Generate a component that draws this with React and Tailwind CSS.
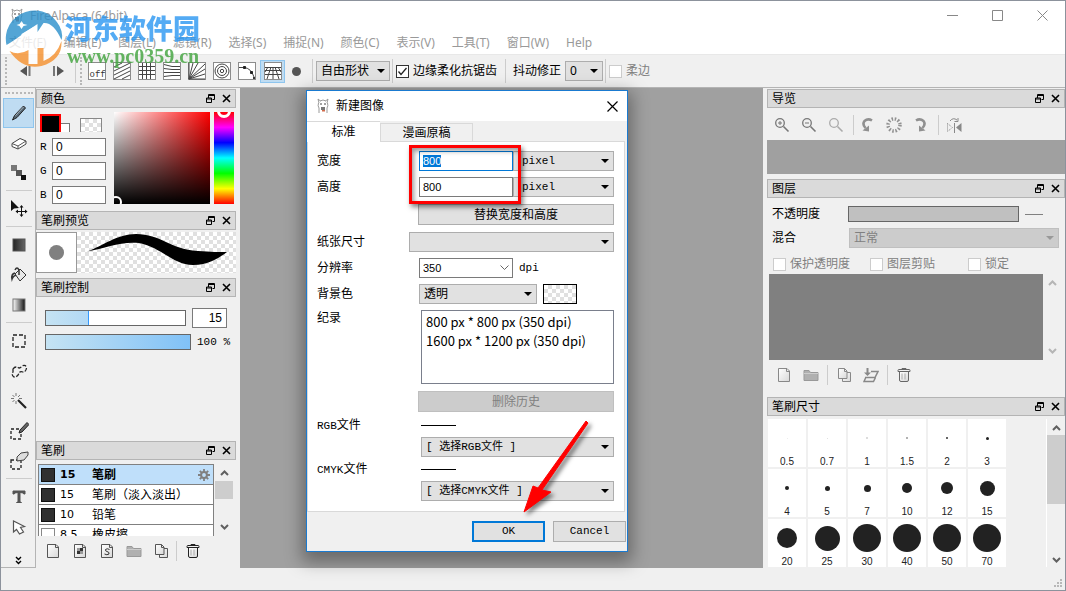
import { useEffect, useRef } from 'react'

const MENUS = ['文件(F)', '编辑(E)', '图层(L)', '滤镜(R)', '选择(S)', '捕捉(N)', '颜色(C)', '表示(V)', '工具(T)', '窗口(W)', 'Help']

const BRUSHES = [
  { size: '15', name: '笔刷', active: true },
  { size: '15', name: '笔刷（淡入淡出）' },
  { size: '10', name: '铅笔' },
  { size: '8.5', name: '橡皮擦', hollow: true },
]

const SIZES = [
  ['0.5', 1, '#e8e8e8'], ['0.7', 1, '#d8d8d8'], ['1', 2, '#d0d0d0'], ['1.5', 2, '#999999'], ['2', 2, '#333333'], ['3', 3, '#222222'],
  ['4', 4, '#222222'], ['5', 5, '#222222'], ['7', 7, '#222222'], ['10', 10, '#222222'], ['12', 12, '#222222'], ['15', 15, '#222222'],
  ['20', 20, '#222222'], ['25', 25, '#222222'], ['30', 28, '#222222'], ['40', 28, '#222222'], ['50', 28, '#222222'], ['70', 28, '#222222'],
]

const CHECKER = 'bg-white bg-[conic-gradient(#e0e0e0_25%,#ffffff_0_50%,#e0e0e0_0_75%,#ffffff_0)] bg-[length:8px_8px]'
const MONO = "font-['Liberation_Mono','Noto_Sans_CJK_SC',monospace] text-[11px]"

function Svg({ w = 20, h = 20, children, className = '' }) {
  return (
    <svg width={w} height={h} viewBox={`0 0 ${w} ${h}`} fill="none" stroke="currentColor" className={`shrink-0 ${className}`} aria-hidden="true">
      {children}
    </svg>
  )
}

function Alpaca() {
  return (
    <Svg w={14} h={16} className="text-[#9a9a9a]">
      <path d="M3 5 L2 1 L4.500 3 M11 5 L12 1 L9.500 3 M4 3 Q7 1 10 3 M2.500 5 Q1.500 8 3 10 V15 M11.500 5 Q12.500 8 11 10 V15" />
      <path d="M4 6 h2 M8 6 h2" stroke="#444" />
      <path d="M5 9 h4 v3 h-4z" fill="#777" stroke="none" />
      <path d="M6 12 h3 v1.500 h-3z" fill="#d06a4a" stroke="none" />
    </Svg>
  )
}

function Drop({ className = '', width = '', disabled, label, value, text = 'text-xs' }) {
  return (
    <span className={`grid shrink-0 items-center ${width}`}>
      <select
        aria-label={label}
        disabled={disabled}
        className={`[grid-area:1/1] h-5 w-full appearance-none border px-1 outline-none disabled:opacity-100 ${text} ${
          disabled ? 'border-[#bfbfbf] bg-[#cccccc] text-[#808080]' : 'border-[#adadad] bg-[#e1e1e1] text-black'
        } ${className}`}
      >
        <option>{value}</option>
      </select>
      <Svg w={8} h={4} className="pointer-events-none [grid-area:1/1] mr-[5px] justify-self-end">
        <path d="M0 0h8L4 4z" fill={disabled ? '#999' : '#000'} stroke="none" />
      </Svg>
    </span>
  )
}

function Check({ label, checked, disabled }) {
  return (
    <label className={`flex items-center gap-1 ${disabled ? 'text-[#808080]' : 'text-black'}`}>
      <span className="grid size-[13px] place-items-center">
        <input
          type="checkbox"
          defaultChecked={checked}
          disabled={disabled}
          className={`[grid-area:1/1] size-[13px] appearance-none border bg-white ${disabled ? 'border-[#cccccc]' : 'border-[#333333]'}`}
        />
        {checked && (
          <Svg w={11} h={11} className="pointer-events-none [grid-area:1/1]">
            <path d="M1.500 5.500 4 8.500 9.500 2" stroke="#222" strokeWidth="1.300" />
          </Svg>
        )}
      </span>
      {label}
    </label>
  )
}

function DockHeader({ title }) {
  return (
    <header className="flex h-[19px] shrink-0 items-center border border-[#b4b4b4] bg-[#dadada] px-1">
      <h2 className="flex-1 leading-4">{title}</h2>
      <button type="button" aria-label={`浮动 ${title}`}>
        <Svg w={9} h={9}>
          <path d="M2.500 4V.5h6v5H6.500M3 1.500h5" />
          <path d="M.5 4h5v4.500h-5zM1 5h4.500" />
        </Svg>
      </button>
      <button type="button" aria-label={`关闭 ${title}`} className="ml-[7px]">
        <Svg w={9} h={9}>
          <path d="M1 1l7 7M8 1L1 8" strokeWidth="1.600" />
        </Svg>
      </button>
    </header>
  )
}

function Chevron({ up, light }) {
  return (
    <Svg w={9} h={6} className={light ? 'text-[#b5b5b5]' : 'text-[#606060]'}>
      <path d={up ? 'M1 5l3.500-3.500L8 5' : 'M1 1l3.500 3.500L8 1'} strokeWidth="2" />
    </Svg>
  )
}

function Grip() {
  return <span className="h-7 w-[3px] border-l-2 border-dotted border-[#b8b8b8]" />
}

function Sep() {
  return <span className="h-6 w-px shrink-0 bg-[#cccccc]" />
}

// ---- toolbar ----

function SnapTile({ children }) {
  return (
    <Svg w={18} h={18} className="text-[#444]">
      <rect x=".5" y=".5" width="17" height="17" fill="#fff" stroke="#8c8c8c" />
      {children}
    </Svg>
  )
}

const SNAPS = [
  ['关', <text key="t" x="1.500" y="15" fontSize="9" stroke="none" fill="#333" fontFamily="Liberation Mono">off</text>],
  ['平行', <path key="p" d="M1 5l8-4M1 9l16-8M1 13l16-8M1 17l16-8M9 17l8-4" />],
  ['十字', <path key="p" d="M4.500 1v16M8.500 1v16M12.500 1v16M1 4.500h16M1 8.500h16M1 12.500h16" />],
  ['消失', <path key="p" d="M1 2.500l8 2h8M1 6.500l8 1h8M1 10.500h16M1 14.500l8-1h8" />],
  ['放射', <path key="p" d="M1 17V1M1 17L5 1M1 17L10 1M1 17L17 2M1 17L17 7M1 17L17 12M1 17h16" />],
  ['同心圆', <g key="p"><circle cx="9" cy="9" r="7" /><circle cx="9" cy="9" r="4.500" /><circle cx="9" cy="9" r="1.700" /></g>],
  ['曲线', <g key="p"><path d="M1 5.500h5Q13 6 16 15v2" /><path d="M5.500 4.500h2v2h-2zM12.500 9.500h2v2h-2zM15.500 15.500h1v1h-1z" fill="#222" stroke="#222" /></g>],
]

function Toolbar() {
  return (
    <div className="flex h-[33px] shrink-0 items-center border-b border-[#b4b4b4] bg-[#f0f0f0] pl-1">
      <Grip />
      <button type="button" aria-label="上一步" className="ml-3 text-[#555]">
        <Svg w={12} h={10}>
          <path d="M7 0v10L0 5z" fill="currentColor" stroke="none" />
          <path d="M9.500 0v10" stroke="#777" strokeWidth="2" />
        </Svg>
      </button>
      <button type="button" aria-label="下一步" className="ml-5 mr-[11px] text-[#555]">
        <Svg w={12} h={10}>
          <path d="M5 0v10l7-5z" fill="currentColor" stroke="none" />
          <path d="M2 0v10" stroke="#777" strokeWidth="2" />
        </Svg>
      </button>
      <Sep />
      <span className="w-1" />
      <Grip />
      <div className="ml-[5px] flex gap-[7px]">
        {SNAPS.map(([name, art]) => (
          <button type="button" key={name} aria-label={name}>
            <SnapTile>{art}</SnapTile>
          </button>
        ))}
      </div>
      <button type="button" aria-label="透视" className="ml-1 grid h-[23px] w-[25px] place-items-center border border-[#8ec5ee] bg-[#bfdcf2]">
        <SnapTile>
          <path d="M1 5.500h16M1 8.500h16M1 12.500h16M7 5L3 17M11 5l4 12M9 5v12M4 5L1 10M14 5l3 5" />
        </SnapTile>
      </button>
      <span className="ml-[7px] mr-[11px] size-[9px] shrink-0 rounded-full bg-[#555]" />
      <Sep />
      <Drop label="形状" value="自由形状" width="ml-[3px] mr-0.5 w-[74px]" />
      <Sep />
      <span className="w-[3px]" />
      <Check label="边缘柔化抗锯齿" checked />
      <span className="w-2" />
      <Sep />
      <label htmlFor="jitter" className="ml-[7px]">抖动修正</label>
      <Drop label="抖动修正" value="0" width="ml-1 mr-0.5 w-[38px]" />
      <Sep />
      <span className="w-[3px]" />
      <Check label="柔边" disabled />
    </div>
  )
}

// ---- tool strip ----

const TOOLS = [
  ['画笔', <g key="g"><path d="M3.500 17l2-4.500L14.500 3l2 2L8 14.500z" fill="#5a6b78" stroke="#222" /><path d="M6.500 12.500l8-8.500" stroke="#a8b6c0" /></g>],
  ['橡皮擦', <g key="g"><path d="M3 10.500l8-5 6 2.500v3l-8 5-6-2.500z" fill="#fff" stroke="#444" /><path d="M3 10.500l6 2.500 8-5M9 13v3" stroke="#555" /></g>],
  ['点', <g key="g" stroke="none"><path d="M2 2h6v6H2z" fill="#777" /><path d="M7 7h6v6H7z" fill="#555" /><path d="M12 12h5v5h-5z" fill="#111" /></g>],
  null,
  ['移动', <g key="g"><path d="M2 1v11l3-2.500 5-.5z" fill="#111" stroke="none" /><path d="M12.500 7v10M7 12.500h11" stroke="#111" /><path d="M10.500 8.500l2-2.500 2 2.500zM10.500 15.500l2 2.500 2-2.500zM9 10.500L6.500 12.500l2.500 2zM16 10.500l2.500 2-2.500 2z" fill="#111" stroke="none" /></g>],
  null,
  ['填色', <rect key="g" x="4" y="4" width="12" height="12" fill="url(#solid)" stroke="#555" />],
  ['油漆桶', <g key="g"><path d="M6 9l5-5 6 6-6 6z" fill="#e8e8e8" stroke="#333" /><path d="M10 10V5Q8 1 6 5M6 8Q2 9 3 14Q4 11 7 10" fill="none" stroke="#333" strokeWidth="1.500" /></g>],
  ['渐变', <rect key="g" x="4" y="4" width="12" height="12" fill="url(#fade)" stroke="#777" />],
  null,
  ['矩形选择', <rect key="g" x="4" y="4" width="12" height="12" stroke="#222" strokeDasharray="4 2" strokeWidth="1.300" />],
  ['套索', <path key="g" d="M4 8Q6 5 9 6.500Q11 8 13 5Q17 3 17.500 7Q17 11 14 11Q11 10 10 12Q9 16 5 16Q2 14 4 11z" stroke="#222" strokeDasharray="4 1.500" strokeWidth="1.300" />],
  ['魔棒', <g key="g"><path d="M9 9l8 8" stroke="#222" strokeWidth="2.200" /><path d="M7 2v3M7 10v3M2 7.500h3M10 7.500h3M3.500 4l2 2M11 4L9 6M3.500 11l2-2" stroke="#777" /></g>],
  ['选择笔', <g key="g"><path d="M2 8h10v10H2z" stroke="#222" strokeDasharray="3 2" strokeWidth="1.300" /><path d="M10 12l1-3L18 1.500l2 2L13 11z" fill="#666" stroke="#222" /></g>],
  ['选择橡皮擦', <g key="g"><path d="M2 9h10v9H2z" stroke="#222" strokeDasharray="3 2" strokeWidth="1.300" /><path d="M8 6l4-4 7-1v3l-4 5-7 1z" fill="#ddd" stroke="#444" /></g>],
  null,
  ['文字', <path key="g" d="M4 7V4h12v3h-1Q14 5.500 11 5.500V15l1.500.5h-5L9 15V5.500Q6 5.500 5 7z" fill="#555" stroke="#555" />],
  ['操作', <path key="g" d="M4.500 4v11l3-2.500 3 4.500 4-2-3-4.500 4-1z" fill="#fff" stroke="#555" strokeWidth="1.200" />],
]

function ToolStrip() {
  return (
    <nav aria-label="工具" className="flex w-[35px] shrink-0 flex-col border-b border-r border-[#b4b4b4] pl-0.5">
      <svg width="0" height="0" className="absolute" aria-hidden="true">
        <defs>
          <linearGradient id="solid"><stop stopColor="#222" /><stop offset="1" stopColor="#666" /></linearGradient>
          <linearGradient id="fade"><stop stopColor="#fff" /><stop offset="1" stopColor="#111" /></linearGradient>
          <linearGradient id="paper" x2="1" y2="1"><stop stopColor="#fff" /><stop offset="1" stopColor="#d8d8d8" /></linearGradient>
        </defs>
      </svg>
      <span className="mx-0.5 mb-[3px] mt-1 h-[3px] border-t-2 border-dotted border-[#b8b8b8]" />
      {TOOLS.map((tool, i) =>
        tool ? (
          <button
            type="button"
            key={tool[0]}
            aria-label={tool[0]}
            className={`grid h-[30px] w-[31px] shrink-0 place-items-center ${i === 0 ? 'border border-[#8ec5ee] bg-[#bfdcf2]' : ''}`}
          >
            <Svg>{tool[1]}</Svg>
          </button>
        ) : (
          <span key={i} className="mx-[3px] my-[2px] h-0.5 border-t border-[#cccccc]" />
        ),
      )}
      <button type="button" aria-label="更多" className="mt-auto grid place-items-center pb-0.5 pr-0.5">
        <Svg w={7} h={9} className="text-black">
          <path d="M1 1l2.500 2.500L6 1M1 5l2.500 2.500L6 5" strokeWidth="1.400" />
        </Svg>
      </button>
    </nav>
  )
}

// ---- left dock ----

function ColorPanel() {
  return (
    <section>
      <DockHeader title="颜色" />
      <div className="flex h-[103px] pl-1">
        <div className="flex w-[66px] flex-col gap-1.5 pt-1.5">
          <div className="flex h-[18px] items-end">
            <span className="h-[18px] w-[21px] border-2 border-b-0 border-[#ff0000] bg-black" />
            <span className="h-[9px] w-[9px] border border-b-0 border-l-0 border-[#777] bg-white" />
            <span className={`ml-2.5 h-3.5 w-[22px] border border-b-0 border-[#888] ${CHECKER}`} />
          </div>
          {['R', 'G', 'B'].map((c) => (
            <label key={c} className={`flex h-[18px] items-center justify-between ${MONO}`}>
              {c}
              <input defaultValue="0" className="h-[18px] w-[54px] border border-[#7a7a7a] bg-white px-[3px] font-['Liberation_Sans',sans-serif] text-xs outline-none" />
            </label>
          ))}
        </div>
        <div className="ml-2 mt-1 flex h-[92px] w-24 items-end overflow-hidden bg-[linear-gradient(to_top,#000,transparent),linear-gradient(to_right,#fff,#f00)]">
          <span className="-mb-1 -ml-1 size-3 rounded-full border-2 border-white" />
        </div>
        <div className="ml-1 mt-1 flex h-[92px] w-5 justify-center overflow-hidden bg-[linear-gradient(to_bottom,#f00,#f0f,#00f,#0ff,#0f0,#ff0,#f00)]">
          <span className="-mt-2 size-3.5 rounded-full border-3 border-white" />
        </div>
      </div>
    </section>
  )
}

function PreviewPanel() {
  return (
    <section>
      <DockHeader title="笔刷预览" />
      <div className="mb-[5px] mt-0.5 flex h-[41px]">
        <span className="grid w-[41px] place-items-center border border-[#999] bg-white">
          <span className="size-[15px] rounded-full bg-[#808080]" />
        </span>
        <span className={`flex-1 ${CHECKER}`}>
          <Svg w={159} h={41}>
            <path d="M10 19.500C26 14 40 2 59 2C84 2 92 17 121 19C134 20 142 20 150 20C143 25 133 33 116 33C96 33 84 15 62 11C44 9 29 16 10 19.500z" fill="#000" stroke="none" />
          </Svg>
        </span>
      </div>
    </section>
  )
}

const RANGE = 'h-4 appearance-none border border-[#666] [&::-webkit-slider-thumb]:size-0 [&::-webkit-slider-thumb]:appearance-none'

function ControlPanel() {
  return (
    <section className="flex-1">
      <DockHeader title="笔刷控制" />
      <div className="flex flex-col gap-1.5 pl-[9px] pt-[11px]">
        <div className="flex items-center gap-1.5">
          <input
            type="range"
            aria-label="笔刷大小"
            defaultValue="30"
            className={`w-[141px] bg-[linear-gradient(to_right,#c5e3f3,#b2d8f4_30%,#3399ff_30%,#3399ff_31%,#fff_31%)] ${RANGE}`}
          />
          <input aria-label="大小" defaultValue="15" className="h-5 w-[35px] border border-[#7a7a7a] bg-white px-1 text-right font-['Liberation_Sans',sans-serif] text-xs outline-none" />
        </div>
        <div className="flex items-center gap-1.5">
          <input type="range" aria-label="不透明度" defaultValue="100" className={`w-[146px] shrink-0 bg-[linear-gradient(to_right,#c5e3f3,#80c1f7)] ${RANGE}`} />
          <output className={`whitespace-nowrap leading-4 ${MONO}`}>100 %</output>
        </div>
      </div>
    </section>
  )
}

function Page({ children }) {
  return (
    <Svg w={16} h={16}>
      <path d="M2.500 1.500h8.500l2.500 2.500v10.500h-11z" fill="url(#paper)" />
      <path d="M10.500 1.500V4.500h3" />
      {children}
    </Svg>
  )
}

function Folder() {
  return (
    <Svg w={16} h={16}>
      <path d="M1 3.500h5l1.500 2H15v8H1z" fill="#b0b0b0" stroke="#999" />
      <path d="M1 6.500h14" stroke="#ccc" />
    </Svg>
  )
}

function Copies() {
  return (
    <Svg w={16} h={16}>
      <path d="M6.500 5.500h8v9h-8z" fill="url(#paper)" />
      <path d="M2.500 1.500h6l2.500 2.500v7.500h-8.500z" fill="url(#paper)" />
      <path d="M8.500 1.500V4.500h2.500" />
    </Svg>
  )
}

function Trash() {
  return (
    <Svg w={16} h={16}>
      <path d="M2 4.500V3.500Q2 2.500 3 2.500h10q1 0 1 1v1zM6 2.500v-1h4v1" />
      <path d="M3.500 5v8q0 1.500 1.500 1.500h6q1.500 0 1.500-1.500V5" fill="url(#paper)" />
      <path d="M6 6.500v6M9 6.500v6" stroke="#aaa" />
    </Svg>
  )
}

function Gear() {
  return (
    <Svg w={12} h={12} className="text-[#808080]">
      <circle cx="6" cy="6" r="2.900" strokeWidth="2" />
      <path d="M6 0v3M6 9v3M0 6h3M9 6h3M1.800 1.800l2 2M8.200 8.200l2 2M10.200 1.800l-2 2M3.800 8.200l-2 2" strokeWidth="1.800" />
    </Svg>
  )
}

function BrushPanel() {
  return (
    <section>
      <DockHeader title="笔刷" />
      <div className="mt-1 flex h-[72px] pl-0.5">
        <ul className="w-44 overflow-hidden border-x border-t border-[#808080] bg-white">
          {BRUSHES.map((b) => (
            <li
              key={`${b.size}-${b.name}`}
              className={`flex h-5 items-center border-b border-[#808080] pl-0.5 pr-[3px] ${b.active ? 'bg-[#bfdffa] font-bold' : ''}`}
            >
              <span className={`size-3.5 border ${b.hollow ? 'border-[#888] bg-white' : 'border-[#111] bg-[#303030]'}`} />
              <span className="ml-[5px] w-8 font-['DejaVu_Sans',sans-serif] text-[11px] leading-[19px]">{b.size}</span>
              <span className="flex-1 leading-[19px]">{b.name}</span>
              {b.active && <Gear />}
            </li>
          ))}
        </ul>
        <div className="ml-px flex w-[18px] flex-col items-center pb-1.5 pt-1.5">
          <Chevron up />
          <span className="mt-[5px] h-[18px] w-full bg-[#cdcdcd]" />
          <span className="flex-1" />
          <Chevron />
        </div>
      </div>
      <div className="flex h-8 items-center gap-[11px] pb-0.5 pl-[9px] text-[#555]">
        <button type="button" aria-label="新建笔刷"><Page /></button>
        <button type="button" aria-label="新建位图笔刷">
          <Page><path d="M8 5h3v3H8zM5 8h3v3H5z" fill="#333" stroke="none" /><path d="M5 5h3v3H5zM8 8h3v3H8z" fill="#999" stroke="none" /></Page>
        </button>
        <button type="button" aria-label="新建脚本笔刷">
          <Page><path d="M10.500 6.500Q8 5 6.500 6.500Q6 8 8 8.500Q10.500 9 10 11Q8 12.500 5.500 11" stroke="#333" /></Page>
        </button>
        <button type="button" aria-label="文件夹"><Folder /></button>
        <button type="button" aria-label="复制"><Copies /></button>
        <span className="-ml-1 -mr-[3px] h-5 w-px bg-[#ccc]" />
        <button type="button" aria-label="删除" className="text-[#222]"><Trash /></button>
      </div>
    </section>
  )
}

// ---- right dock ----

function Lens({ sign, light }) {
  return (
    <Svg w={16} h={16} className={light ? 'text-[#aaa]' : 'text-[#777]'}>
      <circle cx="6" cy="6" r="4.300" strokeWidth="1.300" />
      <path d="M9.500 9.500l5 5" strokeWidth="1.600" />
      {sign && <path d={sign === '+' ? 'M4 6h4M6 4v4' : 'M4 6h4'} />}
    </Svg>
  )
}

function Turn({ flip }) {
  return (
    <Svg w={16} h={16} className={`text-[#909090] ${flip ? '-scale-x-100' : ''}`}>
      <path d="M13 3.500Q9 1 5.500 4Q3 7 6.500 11" strokeWidth="2.600" />
      <path d="M3.500 13.500l6.500 1V8.500z" fill="currentColor" stroke="none" />
    </Svg>
  )
}

function NavigatorPanel() {
  return (
    <section>
      <DockHeader title="导览" />
      <div className="flex h-8 items-center gap-[11px] pl-[7px] pt-px">
        <button type="button" aria-label="放大"><Lens sign="+" /></button>
        <button type="button" aria-label="缩小"><Lens sign="-" /></button>
        <button type="button" aria-label="适应"><Lens light /></button>
        <span className="-ml-0.5 -mr-1.5 h-5 w-px bg-[#ccc]" />
        <button type="button" aria-label="左旋转"><Turn /></button>
        <button type="button" aria-label="重置旋转">
          <Svg w={16} h={16} className="text-[#909090]">
            <circle cx="8" cy="8" r="6" strokeWidth="3.500" strokeDasharray="1.500 1.640" />
          </Svg>
        </button>
        <button type="button" aria-label="右旋转"><Turn flip /></button>
        <span className="-ml-0.5 -mr-1 h-5 w-px bg-[#ccc]" />
        <button type="button" aria-label="反转">
          <Svg w={16} h={16} className="text-[#888]">
            <path d="M4 4Q7 0 11 3M8.500 4.500H12V1" />
            <path d="M8.500 6v10" />
            <path d="M15.500 6v9L10 10.500z" fill="currentColor" stroke="none" />
            <path d="M1.500 6.500v8l5-4z" strokeDasharray="1 1" />
          </Svg>
        </button>
      </div>
      <div className="mb-[5px] h-[34px] bg-[#a0a0a0]" />
    </section>
  )
}

function LayerPanel() {
  return (
    <section className="flex min-h-0 flex-1 flex-col">
      <DockHeader title="图层" />
      <div className="flex flex-col gap-1.5 pb-[5px] pl-[5px] pr-1.5 pt-2">
        <label className="flex h-4 items-center">
          <span className="w-[76px]">不透明度</span>
          <input type="range" disabled defaultValue="0" className={`min-w-0 flex-1 bg-[#c0c0c0] ${RANGE}`} />
          <span className="ml-1.5 mr-4 h-px w-[18px] bg-[#808080]" />
        </label>
        <div className="flex h-5 items-center">
          <span className="w-[77px]">混合</span>
          <Drop label="混合" value="正常" disabled width="flex-1" />
        </div>
        <div className="mt-0.5 grid h-[13px] grid-cols-[97px_98px_1fr] items-center pl-px">
          <Check label="保护透明度" disabled />
          <Check label="图层剪贴" disabled />
          <Check label="锁定" disabled />
        </div>
      </div>
      <div className="flex flex-1 pl-0.5">
        <div className="flex-1 bg-[#808080]" />
        <div className="flex w-[22px] flex-col items-center justify-between pb-1.5 pr-1 pt-1.5">
          <Chevron up light />
          <Chevron light />
        </div>
      </div>
      <div className="mb-1.5 flex h-[31px] items-center gap-[11px] pb-px pl-[9px] text-[#888]">
        <button type="button" aria-label="新建图层"><Page /></button>
        <button type="button" aria-label="新建文件夹"><Folder /></button>
        <span className="-ml-[3px] -mr-[3px] h-5 w-px bg-[#ccc]" />
        <button type="button" aria-label="复制图层"><Copies /></button>
        <button type="button" aria-label="向下合并">
          <Svg w={16} h={16}>
            <path d="M4.500 1v6" strokeWidth="2" />
            <path d="M1 5.500h7L4.500 9z" fill="currentColor" stroke="none" />
            <path d="M8 4.500h7l-3 6H2M3 10l-2 4.500h9.500l2-4" strokeWidth="1.500" />
          </Svg>
        </button>
        <span className="-ml-[3px] -mr-[3px] h-5 w-px bg-[#ccc]" />
        <button type="button" aria-label="删除图层" className="text-[#666]"><Trash /></button>
      </div>
    </section>
  )
}

function SizePanel() {
  return (
    <section>
      <DockHeader title="笔刷尺寸" />
      <div className="mb-px mt-[3px] flex justify-between pl-px">
        <div className="grid grid-cols-[repeat(6,38px)] gap-0.5">
          {SIZES.map(([label, d, color]) => (
            <button type="button" key={label} className="h-12 bg-white">
              <span className="grid h-[38px] place-items-center">
                <span className="rounded-full" style={{ width: d, height: d, background: color }} />
              </span>
              <span className="block font-['Liberation_Sans',sans-serif] text-[10px] leading-[10px] text-[#222]">{label}</span>
            </button>
          ))}
        </div>
        <div className="flex w-[19px] flex-col items-center border-l border-white pb-1 pt-1.5">
          <Chevron up />
          <span className="mt-1 h-[69px] w-full bg-[#cdcdcd]" />
          <span className="flex-1" />
          <Chevron />
        </div>
      </div>
    </section>
  )
}

// ---- dialog ----

function Row({ label, htmlFor, indent = 'pl-2.5', className = 'h-5 items-center', children }) {
  return (
    <div className={`flex ${className}`}>
      <label htmlFor={htmlFor} className="w-[92px] shrink-0 leading-4">{label}</label>
      <div className={`flex min-w-0 flex-1 ${indent}`}>{children}</div>
    </div>
  )
}

function NewImageDialog() {
  const first = useRef(null)

  useEffect(() => {
    first.current.focus()
    first.current.select()
  }, [])

  const field = "h-5 w-[94px] border bg-white px-[3px] font-['Liberation_Sans',sans-serif] text-[11px] outline-none selection:bg-[#0078d7] selection:text-white"

  return (
    <div role="dialog" aria-labelledby="dlg-title" className="absolute left-[66px] top-0.5 z-10 w-[322px] border border-[#1a7ad0] bg-[#f0f0f0] shadow-[0_6px_16px_4px_rgba(0,0,0,0.35)]">
      <div className="flex h-[30px] items-center bg-white pl-[9px] pr-[9px]">
        <Alpaca />
        <h1 id="dlg-title" className="ml-1.5 flex-1">新建图像</h1>
        <button type="button" aria-label="关闭">
          <Svg w={11} h={11}><path d="M.5.5l10 10M10.500.5l-10 10" strokeWidth="1.200" /></Svg>
        </button>
      </div>
      <div role="tablist" className="flex h-5 items-end">
        <button type="button" role="tab" aria-selected="true" className="-mb-px h-[21px] w-[73px] border-t border-[#d9d9d9] bg-white">标准</button>
        <button type="button" role="tab" aria-selected="false" className="h-[18px] w-[93px] border border-b-0 border-[#d9d9d9]">漫画原稿</button>
      </div>
      <div className="mr-0.5 flex flex-col gap-1.5 border border-[#d9d9d9] bg-white pb-[10px] pl-[9px] pr-2.5 pt-[9px]">
        <Row label="宽度" htmlFor="w">
          <input id="w" ref={first} defaultValue="800" className={`border-[#0078d7] ${field}`} />
          <Drop label="宽度单位" value="pixel" text={MONO} width="flex-1" className="pl-2" />
        </Row>
        <Row label="高度" htmlFor="h">
          <input id="h" defaultValue="800" className={`border-[#7a7a7a] ${field}`} />
          <Drop label="高度单位" value="pixel" text={MONO} width="flex-1" className="pl-2" />
        </Row>
        <Row indent="pl-[9px]" className="h-[23px] items-center">
          <button type="button" className="h-[21px] flex-1 border border-[#adadad] bg-[#e1e1e1]">替换宽度和高度</button>
        </Row>
        <Row label="纸张尺寸" indent="">
          <Drop label="纸张尺寸" value="" width="flex-1" />
        </Row>
        <Row label="分辨率">
          <span className="grid w-[94px] items-center">
            <input aria-label="分辨率" defaultValue="350" className={`[grid-area:1/1] border-[#7a7a7a] ${field}`} />
            <Svg w={9} h={6} className="pointer-events-none [grid-area:1/1] mr-1 justify-self-end text-[#666]"><path d="M.5.5l4 4 4-4" /></Svg>
          </span>
          <span className={`ml-1.5 leading-5 ${MONO}`}>dpi</span>
        </Row>
        <Row label="背景色">
          <Drop label="背景色" value="透明" width="w-[118px]" />
          <button type="button" aria-label="背景色样" className={`ml-1.5 h-5 w-[34px] border border-black ${CHECKER}`} />
        </Row>
        <Row label="纪录" indent="pl-3" className="h-[74px]">
          <ul className="flex-1 border border-[#7a7f8c] px-1 pt-px font-['Noto_Sans_CJK_SC',sans-serif] text-[13px] leading-[19px]">
            <li>800 px * 800 px (350 dpi)</li>
            <li>1600 px * 1200 px (350 dpi)</li>
          </ul>
        </Row>
        <div className="flex flex-col gap-1">
          <Row indent="pl-[9px]" className="h-[23px] items-center">
            <button type="button" disabled className="h-[21px] flex-1 border border-[#bfbfbf] bg-[#cccccc] text-[#808080]">删除历史</button>
          </Row>
          {['RGB', 'CMYK'].map((mode) => (
            <div key={mode} className="flex flex-col gap-1">
              <Row label={<><span className={MONO}>{mode}</span>文件</>} indent="pl-3" className="h-4 items-center">
                <span className="h-px w-[35px] bg-black" />
              </Row>
              <Row indent="pl-3">
                <Drop label={`${mode}文件`} value={`[ 选择${mode}文件 ]`} text={MONO} width="flex-1" />
              </Row>
            </div>
          ))}
        </div>
      </div>
      <div className={`flex justify-end gap-2 py-[9px] pr-px ${MONO}`}>
        <button type="button" className="h-[21px] w-[73px] border-2 border-[#0078d7] bg-[#e1e1e1]">OK</button>
        <button type="button" className="h-[21px] w-[73px] border border-[#adadad] bg-[#e1e1e1]">Cancel</button>
      </div>
    </div>
  )
}

function Annotations() {
  return (
    <div className="pointer-events-none absolute inset-0 z-20" aria-hidden="true">
      <span className="absolute left-[169px] top-[57px] h-[59px] w-28 border-3 border-[#ff0000] shadow-[2px_3px_5px_rgba(0,0,0,0.5),inset_2px_3px_5px_rgba(0,0,0,0.4)]" />
      <svg width="80" height="104" viewBox="0 0 80 104" className="absolute left-[278px] top-[328px] drop-shadow-[3px_3px_2px_rgba(0,0,0,0.5)]">
        <path d="M68 5L70 7 24 74 33 76 6 96 15 70 20 72z" fill="#ff0000" stroke="#ff0000" strokeLinejoin="round" />
      </svg>
    </div>
  )
}

function Watermark() {
  return (
    <div className="pointer-events-none absolute left-1 top-[9px] z-30 flex opacity-80" aria-hidden="true">
      <svg width="60" height="58" viewBox="0 0 59 58">
        <circle cx="29" cy="29" r="27" fill="#fff" />
        <path d="M1 35A28 28 0 0 1 20 2Q42-4 54 16Q58 24 56 30Q48 12 38 13L32 22V14L20 22Q8 31 1 35z" fill="#2a8fcb" />
        <path d="M56 31Q57 50 36 56Q17 60 4 41Q13 46 23 40V54H32V38H38V51Q51 46 56 31z" fill="#f6902c" />
        <path d="M16 24L28 17V36Q22 40 16 40zM34 20H41V34H34z" fill="#fff" />
        <path d="M14 14l2-3 2 3 4 1-4 1-2 3-2-3-3-1z" fill="#fff" />
      </svg>
      <div className="pt-0.5">
        <p className="font-['Noto_Sans_CJK_SC',sans-serif] text-[27px] font-black leading-8 text-[#2a97f2]">河东软件园</p>
        <p className="pl-0.5 font-['Liberation_Serif',serif] text-xl font-bold leading-6 text-[#3fa33c]">www.pc0359.cn</p>
      </div>
    </div>
  )
}

export default function App() {
  return (
    <div className="relative flex h-screen min-h-[560px] flex-col overflow-hidden border border-[#8c929c] bg-[#f0f0f0] font-['Noto_Sans','Noto_Sans_CJK_SC',sans-serif] text-xs text-black">
      <div className="flex h-[29px] shrink-0 items-center bg-white pl-[9px] pr-[17px] text-[#999]">
        <Alpaca />
        <span className="ml-1.5 flex-1">FireAlpaca (64bit)</span>
        <div className="flex items-center gap-[34px] text-[#888]">
          <button type="button" aria-label="最小化"><Svg w={11} h={11}><path d="M0 5.500h11" /></Svg></button>
          <button type="button" aria-label="最大化"><Svg w={11} h={11}><path d="M.5.5h10v10H.5z" /></Svg></button>
          <button type="button" aria-label="关闭窗口"><Svg w={11} h={11}><path d="M.5.5l10 10M10.500.5l-10 10" /></Svg></button>
        </div>
      </div>
      <nav aria-label="菜单" className="flex h-[25px] shrink-0 items-center gap-[17px] border-b border-[#e8e8e8] bg-white pl-2 pt-0.5 text-[#999]">
        {MENUS.map((m) => (
          <button type="button" key={m}>{m}</button>
        ))}
      </nav>
      <Toolbar />
      <div className="flex min-h-0 flex-1">
        <ToolStrip />
        <aside className="mr-1 flex w-[200px] shrink-0 flex-col pt-px">
          <ColorPanel />
          <PreviewPanel />
          <ControlPanel />
          <BrushPanel />
        </aside>
        <main className="relative min-w-0 flex-1 bg-[#a0a0a0]">
          <NewImageDialog />
          <Annotations />
        </main>
        <aside className="ml-1 flex w-[298px] shrink-0 flex-col pt-px">
          <NavigatorPanel />
          <LayerPanel />
          <SizePanel />
        </aside>
      </div>
      <footer className="flex h-[22px] shrink-0 items-end justify-end pb-0.5 pr-0.5">
        <Svg w={9} h={9}>
          <path d="M6 0h2v2H6zM3 3h2v2H3zM6 3h2v2H6zM0 6h2v2H0zM3 6h2v2H3zM6 6h2v2H6z" fill="#b8b8b8" stroke="none" />
        </Svg>
      </footer>
      <Watermark />
    </div>
  )
}
